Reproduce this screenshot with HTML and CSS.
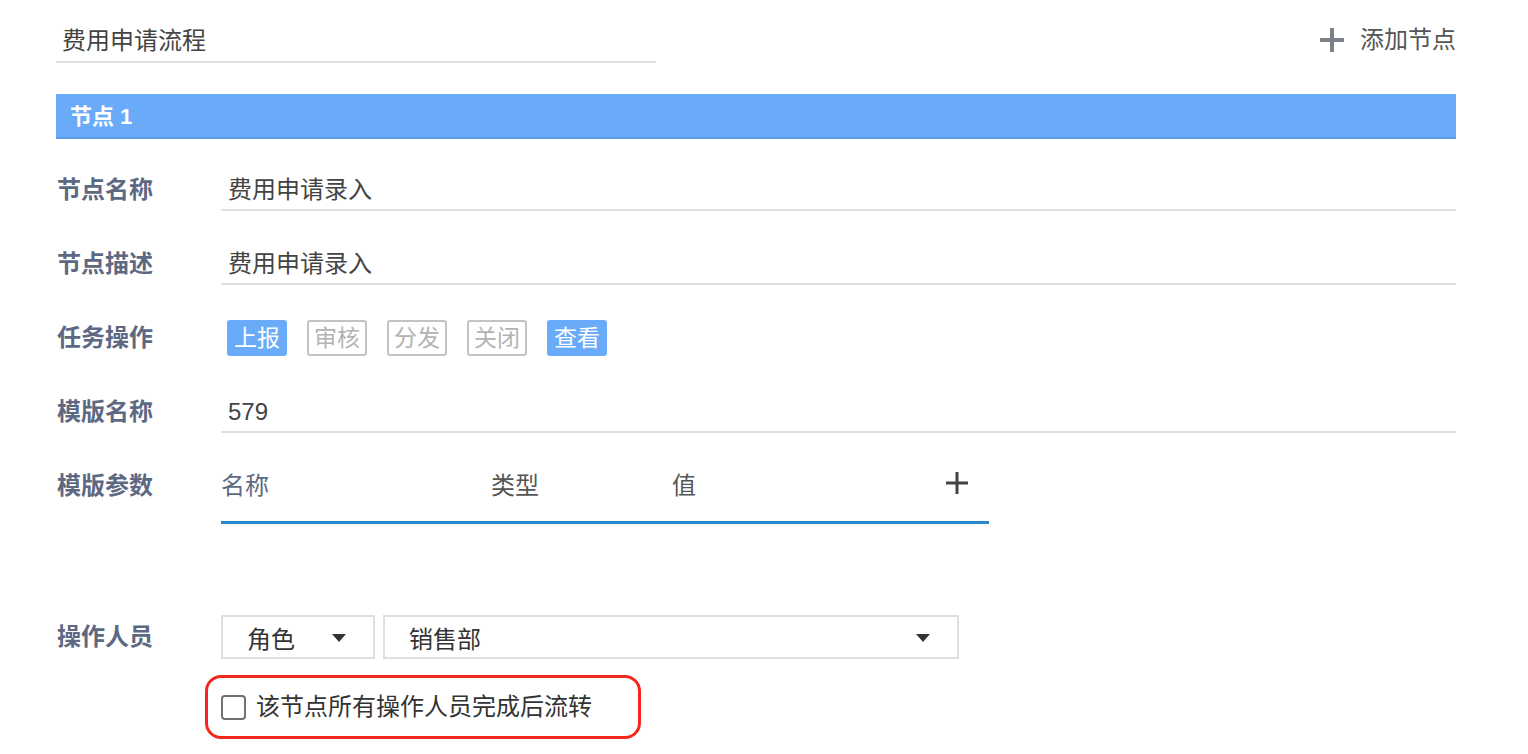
FILE: index.html
```html
<!DOCTYPE html>
<html lang="zh-CN">
<head>
<meta charset="utf-8">
<title>费用申请流程</title>
<link rel="stylesheet" href="styles.css">
</head>
<body>
<div class="page">
  <div class="top">
    <div class="title-input">费用申请流程</div>
    <div class="add-node">
      <svg class="add-icon" width="26" height="26" viewBox="0 0 26 26"><path d="M13 1v24M1 13h24" stroke="#7a8089" stroke-width="4" fill="none"/></svg>
      <span>添加节点</span>
    </div>
  </div>

  <div class="node-bar">节点 1</div>

  <div class="row">
    <div class="label">节点名称</div>
    <div class="field">费用申请录入</div>
  </div>
  <div class="row">
    <div class="label">节点描述</div>
    <div class="field">费用申请录入</div>
  </div>
  <div class="row">
    <div class="label">任务操作</div>
    <div class="tags">
      <span class="tag on">上报</span>
      <span class="tag">审核</span>
      <span class="tag">分发</span>
      <span class="tag">关闭</span>
      <span class="tag on">查看</span>
    </div>
  </div>
  <div class="row">
    <div class="label">模版名称</div>
    <div class="field">579</div>
  </div>
  <div class="row params-row">
    <div class="label">模版参数</div>
    <div class="params">
      <span class="col col-name">名称</span>
      <span class="col col-type">类型</span>
      <span class="col col-val">值</span>
      <svg class="param-add" width="24" height="24" viewBox="0 0 24 24"><path d="M12 1v22M1 12h22" stroke="#444" stroke-width="3" fill="none"/></svg>
    </div>
  </div>

  <div class="row ops-row">
    <div class="label ops-label">操作人员</div>
    <div class="selects">
      <div class="select sel-role"><span>角色</span><i class="caret"></i></div>
      <div class="select sel-dept"><span>销售部</span><i class="caret"></i></div>
    </div>
  </div>

  <div class="check-wrap">
    <label class="check-box">
      <span class="box"></span>
      <span class="check-text">该节点所有操作人员完成后流转</span>
    </label>
  </div>
</div>
</body>
</html>
```

FILE: styles.css
```css
* { box-sizing: border-box; }
html, body {
  margin: 0;
  padding: 0;
  background: #fff;
}
body {
  font-family: "Liberation Sans", "Noto Sans CJK SC", sans-serif;
  color: #444;
}
.page {
  width: 1400px;
  margin-left: 56px;
}
.top {
  display: flex;
  justify-content: space-between;
  align-items: flex-start;
  height: 63px;
}
.title-input {
  width: 600px;
  padding: 24px 0 3px 6px;
  font-size: 24px;
  line-height: 34px;
  color: #444;
  border-bottom: 2px solid #dcdfe3;
}
.add-node {
  display: flex;
  align-items: center;
  gap: 15px;
  padding-top: 23px;
  font-size: 24px;
  line-height: 34px;
  color: #555;
}
.add-icon { display: block; margin-top: -1px; }
.node-bar {
  margin-top: 31px;
  height: 45px;
  background: #69abf8;
  border-bottom: 2px solid #5a9be7;
  color: #fff;
  font-size: 22px;
  font-weight: 700;
  line-height: 45px;
  padding-left: 14px;
}
.row {
  display: flex;
  align-items: flex-start;
  margin-top: 32px;
}
.row + .row { margin-top: 34px; }
.label {
  width: 165px;
  flex: none;
  padding-left: 1px;
  font-size: 24px;
  font-weight: 700;
  line-height: 38px;
  color: #5d6983;
}
.ops-label { line-height: 44px; }
.field {
  flex: 1;
  height: 40px;
  padding-left: 7px;
  font-size: 24px;
  line-height: 38px;
  color: #444;
  border-bottom: 2px solid #dcdfe3;
}
.tags {
  display: flex;
  gap: 20px;
  padding: 1px 0 0 6px;
  height: 40px;
}
.tag {
  width: 60px;
  height: 36px;
  border: 2px solid #c3c3c3;
  border-radius: 3px;
  color: #b3b3b3;
  font-size: 23px;
  line-height: 32px;
  text-align: center;
}
.tag.on {
  background: #69abf8;
  border-color: #69abf8;
  color: #fff;
}
.params {
  position: relative;
  width: 768px;
  height: 57px;
  border-bottom: 3px solid #2a88d0;
  display: flex;
  font-size: 24px;
  line-height: 38px;
}
.col { display: block; }
.col-name { width: 270px; color: #5d6983; }
.col-type { width: 181px; color: #555; }
.col-val { color: #555; }
.param-add {
  position: absolute;
  right: 20px;
  top: 4px;
}
.ops-row.row { margin-top: 91px; }
.selects {
  display: flex;
  gap: 8px;
}
.select {
  height: 44px;
  border: 2px solid #dcdfe3;
  display: flex;
  align-items: center;
  justify-content: space-between;
  padding: 0 27px 0 24px;
  font-size: 24px;
  color: #333;
}
.sel-role { width: 154px; }
.sel-dept { width: 576px; }
.caret {
  width: 0;
  height: 0;
  border-left: 7px solid transparent;
  border-right: 7px solid transparent;
  border-top: 8px solid #333;
  margin-top: 2px;
}
.check-wrap {
  margin: 16px 0 0 149px;
}
.check-box {
  width: 436px;
  height: 64px;
  border: 3px solid #f3281c;
  border-radius: 16px;
  display: flex;
  align-items: center;
  padding-left: 13px;
  gap: 10px;
}
.box {
  width: 25px;
  height: 25px;
  border: 2px solid #707070;
  border-radius: 4px;
  flex: none;
}
.check-text {
  font-size: 24px;
  color: #333;
  line-height: 30px;
}
```
